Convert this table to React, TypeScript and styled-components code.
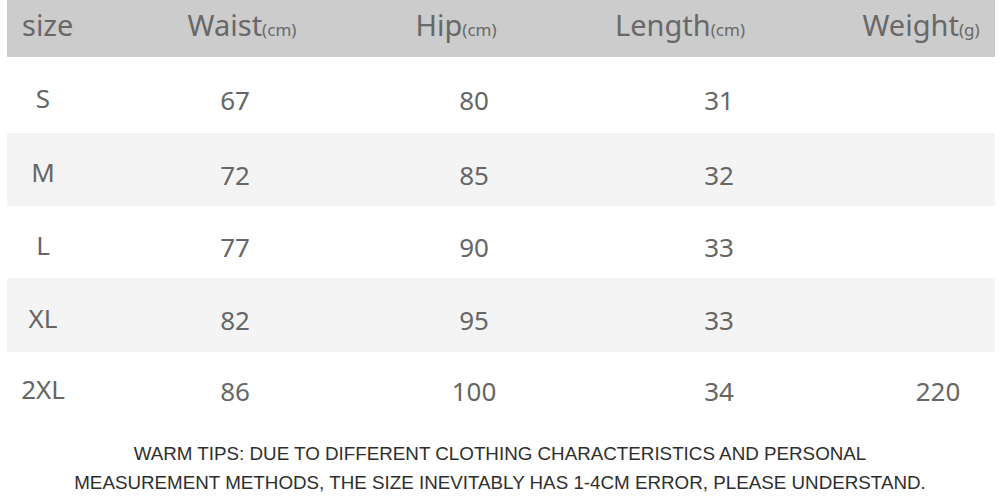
import React from 'react';
import styled, { createGlobalStyle } from 'styled-components';

const GlobalStyle = createGlobalStyle`
  html, body {
    margin: 0;
    padding: 0;
    background: #ffffff;
  }
  body {
    width: 1000px;
    height: 503px;
    overflow: hidden;
    font-family: "Noto Sans", "Open Sans", sans-serif;
  }
`;

interface SizeRow {
  size: string;
  waist: number;
  hip: number;
  length: number;
  weight?: number;
}

const rows: SizeRow[] = [
  { size: 'S', waist: 67, hip: 80, length: 31 },
  { size: 'M', waist: 72, hip: 85, length: 32 },
  { size: 'L', waist: 77, hip: 90, length: 33 },
  { size: 'XL', waist: 82, hip: 95, length: 33 },
  { size: '2XL', waist: 86, hip: 100, length: 34, weight: 220 },
];

const headers = [
  { label: 'Waist', unit: 'cm' },
  { label: 'Hip', unit: 'cm' },
  { label: 'Length', unit: 'cm' },
  { label: 'Weight', unit: 'g' },
];

const Page = styled.div`
  display: flex;
  flex-direction: column;
  padding: 0 5px 0 7px;
`;

const Table = styled.div`
  display: flex;
  flex-direction: column;
  width: 988px;
`;

const Row = styled.div<{ $cols: string; $height: number; $bg: string }>`
  display: grid;
  grid-template-columns: ${(p) => p.$cols};
  height: ${(p) => p.$height}px;
  background: ${(p) => p.$bg};
  align-items: center;
`;

const HeadCell = styled.div<{ $left?: boolean }>`
  font-size: 29px;
  color: #686868;
  text-align: ${(p) => (p.$left ? 'left' : 'center')};
  padding-left: ${(p) => (p.$left ? '15px' : '0')};
  padding-bottom: 9px;
  white-space: nowrap;
`;

const Unit = styled.span`
  font-size: 17px;
`;

const Cell = styled.div`
  font-size: 26px;
  color: #666666;
  text-align: center;
  padding-top: 10px;
  white-space: nowrap;
`;

const SizeCell = styled(Cell)`
  padding-top: 5px;
`;

const Tips = styled.div`
  margin-top: 19px;
  font-family: "Liberation Sans", Arial, sans-serif;
  font-size: 18.8px;
  line-height: 29px;
  color: #2e2e2e;
  text-align: center;
  width: 1000px;
  margin-left: -7px;
`;

const HEAD_COLS = '78px 314px 114px 334px 148px';
const BODY_COLS = '72px 312px 166px 324px 114px';
const ROW_HEIGHTS = [76, 73, 72, 74, 68];

const App: React.FC = () => (
  <>
    <GlobalStyle />
    <Page>
      <Table>
        <Row $cols={HEAD_COLS} $height={57} $bg="#cccccc">
          <HeadCell $left>size</HeadCell>
          {headers.map((h) => (
            <HeadCell key={h.label}>
              {h.label}
              <Unit>({h.unit})</Unit>
            </HeadCell>
          ))}
        </Row>
        {rows.map((r, i) => (
          <Row
            key={r.size}
            $cols={BODY_COLS}
            $height={ROW_HEIGHTS[i]}
            $bg={i % 2 === 1 ? '#f4f4f4' : '#ffffff'}
          >
            <SizeCell>{r.size}</SizeCell>
            <Cell>{r.waist}</Cell>
            <Cell>{r.hip}</Cell>
            <Cell>{r.length}</Cell>
            <Cell>{r.weight ?? ''}</Cell>
          </Row>
        ))}
      </Table>
      <Tips>
        WARM TIPS: DUE TO DIFFERENT CLOTHING CHARACTERISTICS AND PERSONAL
        <br />
        MEASUREMENT METHODS, THE SIZE INEVITABLY HAS 1-4CM ERROR, PLEASE UNDERSTAND.
      </Tips>
    </Page>
  </>
);

export default App;
